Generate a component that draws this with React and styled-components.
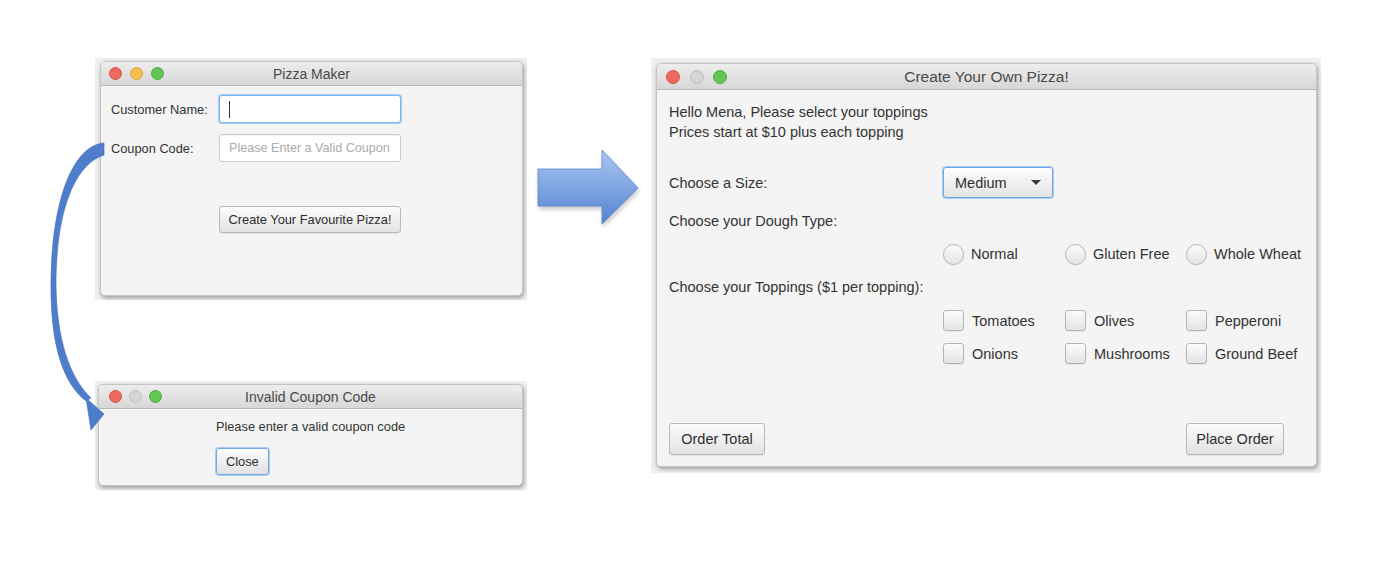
import React from 'react';
import styled, { createGlobalStyle } from 'styled-components';

const GlobalStyle = createGlobalStyle`
  html, body {
    margin: 0;
    padding: 0;
    background: #fff;
  }
  body {
    font-family: "Liberation Sans", Arial, sans-serif;
    color: #333;
  }
`;

const Canvas = styled.div`
  position: relative;
  width: 1390px;
  height: 578px;
  overflow: hidden;
  background: #fff;
`;

// a screenshot of one window, placed on the diagram
const Shot = styled.div`
  position: absolute;
  left: ${p => p.$x}px;
  top: ${p => p.$y}px;
  width: ${p => p.$w}px;
  height: ${p => p.$h}px;
  box-sizing: border-box;
  padding: ${p => p.$pad};
  background: #efefef;
  display: flex;
`;

const Window = styled.div`
  flex: 1;
  display: flex;
  flex-direction: column;
  background: #f4f4f4;
  border: 1px solid #c4c4c4;
  border-radius: 5px;
  box-shadow: 1px 2px 4px rgba(0, 0, 0, 0.35);
  overflow: hidden;
`;

const TitleBar = styled.div`
  flex: none;
  height: ${p => p.$h}px;
  box-sizing: border-box;
  display: grid;
  grid-template-columns: 1fr auto 1fr;
  align-items: center;
  padding: 0 ${p => p.$padX}px;
  background: linear-gradient(#ededed, #d7d7d7);
  border-bottom: 1px solid #b9b9b9;
`;

const Lights = styled.div`
  display: flex;
  gap: ${p => p.$gap}px;
`;

const lightColors = {
  red: ['#ee6a5f', '#d5544a'],
  yellow: ['#f5bf4f', '#d9a13a'],
  green: ['#62c655', '#4fa944'],
  off: ['#d4d4d4', '#c0c0c0'],
};

const Light = styled.span`
  width: ${p => p.$size}px;
  height: ${p => p.$size}px;
  box-sizing: border-box;
  border-radius: 50%;
  background: ${p => lightColors[p.$c][0]};
  border: 0.5px solid ${p => lightColors[p.$c][1]};
`;

const Title = styled.div`
  font-size: ${p => p.$fs}px;
  color: #4a4a4a;
  white-space: nowrap;
`;

const Row = styled.div`
  display: grid;
  grid-template-columns: ${p => p.$cols};
  align-items: center;
  height: ${p => p.$h}px;
  margin-top: ${p => p.$mt || 0}px;
`;

const Label = styled.span`
  font-size: ${p => p.$fs}px;
  color: #333;
  white-space: nowrap;
`;

const TextField = styled.div`
  height: 28px;
  box-sizing: border-box;
  display: flex;
  align-items: center;
  padding: 0 9px;
  background: #fff;
  border: 1px solid ${p => (p.$focused ? '#7db6ec' : '#cbcbcb')};
  box-shadow: ${p => (p.$focused ? '0 0 0 1px #a6cdf3' : 'inset 0 1px 1px rgba(0,0,0,0.05)')};
  border-radius: 3px;
  font-size: 12.6px;
  color: #ababab;
  white-space: nowrap;
`;

const Caret = styled.span`
  width: 1px;
  height: 17px;
  background: #333;
`;

const PushButton = styled.button`
  width: ${p => p.$w}px;
  height: ${p => p.$h}px;
  box-sizing: border-box;
  padding: 0;
  font-family: inherit;
  font-size: ${p => p.$fs}px;
  color: #2e2e2e;
  background: linear-gradient(#fcfcfc, #e2e2e2);
  border: 1px solid ${p => (p.$focused ? '#6ea9e6' : '#b9b9b9')};
  box-shadow: ${p => (p.$focused ? '0 0 0 1px #a9cdf2' : '0 1px 0 rgba(0,0,0,0.06)')};
  border-radius: 3px;
  white-space: nowrap;
`;

/* --- Pizza Maker --- */

const FormBody = styled.div`
  padding: 9px 0 0 10px;
`;

/* --- Invalid Coupon Code --- */

const AlertBody = styled.div`
  display: flex;
  justify-content: center;
  padding-top: 10px;
`;

const AlertStack = styled.div`
  display: flex;
  flex-direction: column;
  align-items: flex-start;
  gap: 13px;
`;

const Message = styled.div`
  font-size: 12.8px;
  line-height: 16px;
  color: #333;
`;

/* --- Create Your Own Pizza! --- */

const OrderBody = styled.div`
  flex: 1;
  display: flex;
  flex-direction: column;
  padding: 12px 0 11px 12px;
`;

const Intro = styled.div`
  font-size: 14.5px;
  line-height: 20px;
  color: #333;
`;

const Combo = styled.div`
  width: 110px;
  height: 31px;
  box-sizing: border-box;
  display: flex;
  align-items: center;
  justify-content: space-between;
  padding: 0 11px 0 11px;
  background: linear-gradient(#fdfdfd, #e4e4e4);
  border: 1px solid #6ea9e6;
  box-shadow: 0 0 0 1px #a9cdf2;
  border-radius: 3px;
  font-size: 14.5px;
  color: #2e2e2e;
`;

const Caret3 = styled.span`
  width: 0;
  height: 0;
  border-left: 5px solid transparent;
  border-right: 5px solid transparent;
  border-top: 5px solid #3a3a3a;
`;

const Option = styled.div`
  display: flex;
  align-items: center;
  gap: ${p => (p.$round ? 7 : 8)}px;
  font-size: 14.5px;
  color: #333;
  white-space: nowrap;
`;

const Mark = styled.span`
  width: 21px;
  height: 21px;
  box-sizing: border-box;
  flex: none;
  border-radius: ${p => (p.$round ? '50%' : '3px')};
  background: linear-gradient(#fbfbfb, #e3e3e3);
  border: 1px solid #b5b5b5;
  box-shadow: 0 1px 0 rgba(0, 0, 0, 0.05);
`;

const Footer = styled(Row)`
  margin-top: auto;
`;

const Drawing = styled.svg`
  position: absolute;
  left: ${p => p.$x}px;
  top: ${p => p.$y}px;
  overflow: visible;
`;

const ShadowDrawing = styled(Drawing)`
  filter: drop-shadow(1px 3px 2px rgba(0, 0, 0, 0.22));
`;

const TrafficLights = ({ size, gap, second }) => (
  <Lights $gap={gap}>
    <Light $size={size} $c="red" />
    <Light $size={size} $c={second} />
    <Light $size={size} $c="green" />
  </Lights>
);

const COLS3 = '274px 122px 121px auto';

const doughs = ['Normal', 'Gluten Free', 'Whole Wheat'];
const toppings = [
  ['Tomatoes', 'Olives', 'Pepperoni'],
  ['Onions', 'Mushrooms', 'Ground Beef'],
];

const App = () => (
  <Canvas>
    <GlobalStyle />

    <Shot $x={95} $y={58} $w={432} $h={242} $pad="3px 4px 4px 5px">
      <Window>
        <TitleBar $h={24} $padX={7.5}>
          <TrafficLights size={13} gap={8} second="yellow" />
          <Title $fs={14}>Pizza Maker</Title>
          <span />
        </TitleBar>
        <FormBody>
          <Row $cols="108px 182px" $h={28}>
            <Label $fs={12.8}>Customer Name:</Label>
            <TextField $focused>
              <Caret />
            </TextField>
          </Row>
          <Row $cols="108px 182px" $h={28} $mt={11}>
            <Label $fs={12.8}>Coupon Code:</Label>
            <TextField>Please Enter a Valid Coupon</TextField>
          </Row>
          <Row $cols="108px 182px" $h={27} $mt={44}>
            <span />
            <PushButton $w={182} $h={27} $fs={12.8}>Create Your Favourite Pizza!</PushButton>
          </Row>
        </FormBody>
      </Window>
    </Shot>

    <Shot $x={95} $y={381} $w={432} $h={109} $pad="3px 4px 4px 3px">
      <Window>
        <TitleBar $h={24} $padX={9.5}>
          <TrafficLights size={13} gap={7} second="off" />
          <Title $fs={14}>Invalid Coupon Code</Title>
          <span />
        </TitleBar>
        <AlertBody>
          <AlertStack>
            <Message>Please enter a valid coupon code</Message>
            <PushButton $w={53} $h={27} $fs={12.8} $focused>Close</PushButton>
          </AlertStack>
        </AlertBody>
      </Window>
    </Shot>

    <Shot $x={651} $y={58} $w={670} $h={415} $pad="5px 4px 6px 5px">
      <Window>
        <TitleBar $h={26} $padX={9}>
          <TrafficLights size={14} gap={9.5} second="off" />
          <Title $fs={15.5}>Create Your Own Pizza!</Title>
          <span />
        </TitleBar>
        <OrderBody>
          <Intro>
            Hello Mena, Please select your toppings
            <br />
            Prices start at $10 plus each topping
          </Intro>
          <Row $cols={COLS3} $h={31} $mt={25}>
            <Label $fs={14.5}>Choose a Size:</Label>
            <Combo>
              Medium
              <Caret3 />
            </Combo>
          </Row>
          <Row $cols={COLS3} $h={20} $mt={13}>
            <Label $fs={14.5}>Choose your Dough Type:</Label>
          </Row>
          <Row $cols={COLS3} $h={22} $mt={12}>
            <span />
            {doughs.map(d => (
              <Option key={d} $round>
                <Mark $round />
                {d}
              </Option>
            ))}
          </Row>
          <Row $cols={COLS3} $h={20} $mt={12}>
            <Label $fs={14.5}>Choose your Toppings ($1 per topping):</Label>
          </Row>
          {toppings.map((row, i) => (
            <Row key={i} $cols={COLS3} $h={21} $mt={i === 0 ? 13 : 12}>
              <span />
              {row.map(t => (
                <Option key={t}>
                  <Mark />
                  {t}
                </Option>
              ))}
            </Row>
          ))}
          <Footer $cols={COLS3} $h={32}>
            <PushButton $w={96} $h={32} $fs={14.5}>Order Total</PushButton>
            <span />
            <span />
            <PushButton $w={98} $h={32} $fs={14.5}>Place Order</PushButton>
          </Footer>
        </OrderBody>
      </Window>
    </Shot>

    <ShadowDrawing $x={534} $y={146} width="112" height="86" viewBox="534 146 112 86">
      <defs>
        <linearGradient id="blockFill" x1="0" y1="0" x2="0" y2="1">
          <stop offset="0" stopColor="#aac5ef" />
          <stop offset="0.5" stopColor="#80a6e2" />
          <stop offset="1" stopColor="#5182cf" />
        </linearGradient>
      </defs>
      <polygon
        points="538,169 602,169 602,150 638,188 602,224 602,206 538,206"
        fill="url(#blockFill)"
        stroke="#5a85cc"
        strokeWidth="0.8"
      />
    </ShadowDrawing>

    <Drawing $x={40} $y={135} width="75" height="300" viewBox="40 135 75 300">
      <path
        d="M104,143 C75,145 52,195 51,280 C50,345 63,383 86,401 L91,398 C70,378 56.5,340 56,284 C56,215 73,165 104,155 Z"
        fill="#4d7dcb"
        stroke="#3f6db8"
        strokeWidth="0.6"
      />
      <polygon points="86,398 104,414 91,430" fill="#4d7dcb" stroke="#3f6db8" strokeWidth="0.6" />
    </Drawing>
  </Canvas>
);

export default App;
